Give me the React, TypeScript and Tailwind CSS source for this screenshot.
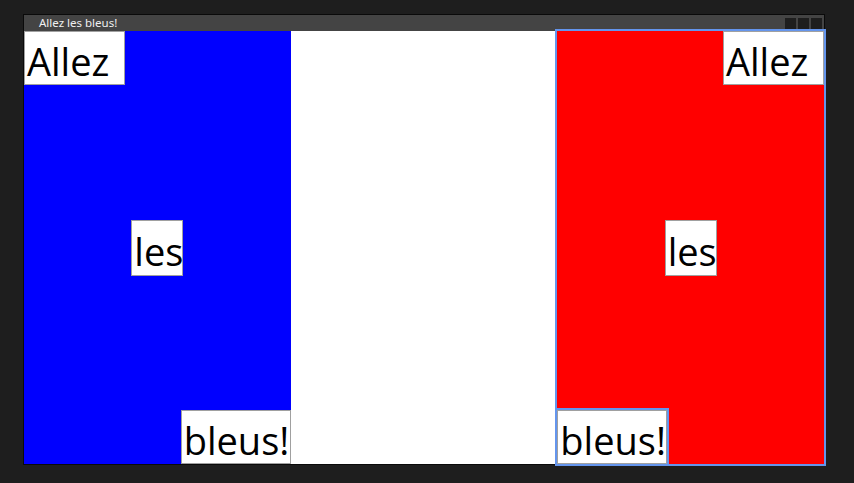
import React from "react";

const labelBase =
  "bg-white border border-[#a0a0a0] text-black text-[38px] leading-[56px] whitespace-nowrap pl-[2px] pt-[1px] box-border";

export default function App() {
  const font = { fontFamily: '"Open Sans", "Noto Sans", sans-serif' };
  return (
    <div className="w-[854px] h-[483px] bg-[#1e1e1e] pl-[23px] pt-[14px]" style={font}>
      <div className="w-[802px] h-[451px] border border-[#0a0a0a] flex flex-col">
        <div className="h-[16px] bg-[#444444] flex items-center pl-[15px] pr-[2px]">
          <span className="text-[11.5px] leading-none text-[#f0f0f0] flex-1" style={{ fontFamily: '"Noto Sans", "Open Sans", sans-serif' }}>
            Allez les bleus!
          </span>
          <div className="flex gap-[2px] items-center">
            <div className="w-[11px] h-[11px] bg-[#1e1e1e]" />
            <div className="w-[11px] h-[11px] bg-[#1e1e1e]" />
            <div className="w-[11px] h-[11px] bg-[#1e1e1e]" />
          </div>
        </div>
        <div className="flex-1 grid grid-cols-3">
          <div className="bg-[#0000ff] flex flex-col justify-between">
            <div className={`${labelBase} w-[101px] h-[54px] self-start`}>Allez</div>
            <div className={`${labelBase} w-[52px] h-[56px] self-center pt-[2px]`}>les</div>
            <div className={`${labelBase} w-[110px] h-[54px] self-end`}>bleus!</div>
          </div>
          <div className="bg-white" />
          <div className="bg-[#ff0000] flex flex-col justify-between outline-2 outline-[#6495ed]">
            <div className={`${labelBase} w-[101px] h-[54px] self-end`}>Allez</div>
            <div className={`${labelBase} w-[52px] h-[56px] self-center pt-[2px]`}>les</div>
            <div className={`${labelBase} w-[110px] h-[54px] self-start outline-2 outline-[#6495ed] border-[#6495ed]`}>bleus!</div>
          </div>
        </div>
      </div>
    </div>
  );
}
